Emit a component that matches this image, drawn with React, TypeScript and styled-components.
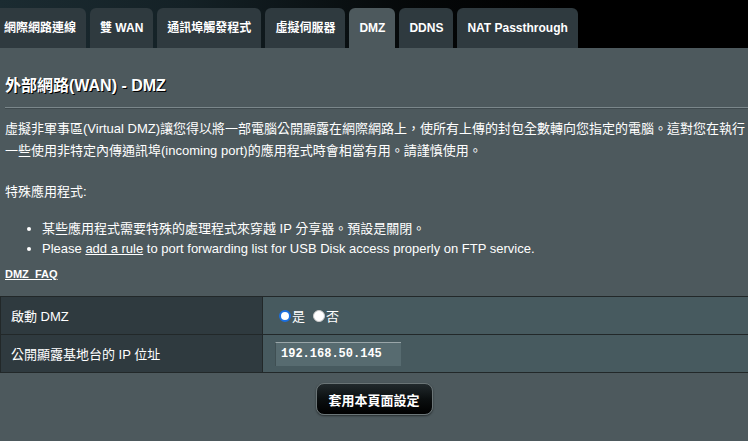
import React from "react";
import styled, { createGlobalStyle } from "styled-components";

const GlobalStyle = createGlobalStyle`
  html, body {
    margin: 0;
    padding: 0;
    background: #4d595d;
  }
  body {
    font-family: "Liberation Sans", Arial, "Noto Sans CJK TC", sans-serif;
    color: #ffffff;
    font-size: 13px;
  }
`;

const Page = styled.div`
  width: 748px;
  min-height: 441px;
  overflow: hidden;
  background: #4d595d;
`;

const TopBar = styled.div`
  height: 48px;
  padding-top: 8px;
  box-sizing: border-box;
  background: linear-gradient(to right, #1b2b31 0%, #142126 25%, #050809 55%, #000000 75%);
  overflow: hidden;
`;

const TabRow = styled.div`
  display: flex;
  gap: 4px;
  margin-left: -6px;
  height: 40px;
`;

const Tab = styled.div<{ $active?: boolean }>`
  display: flex;
  align-items: center;
  height: 40px;
  padding: 0 10px;
  border-radius: 6px 6px 0 0;
  background: ${(p) => (p.$active ? "#4d595d" : "#2f3a3f")};
  font-size: 12px;
  font-weight: bold;
  white-space: nowrap;
  color: #ffffff;
  line-height: 14px;
`;

const Content = styled.div`
  display: flex;
  flex-direction: column;
`;

const Title = styled.div`
  margin-top: 28px;
  padding-left: 5px;
  font-size: 16px;
  line-height: 20px;
  font-weight: bold;
  text-shadow: 1px 1px 0 #000;
`;

const Divider = styled.div`
  margin: 11px 0 0 5px;
  height: 1px;
  background: #7b878b;
  border-bottom: 1px solid #3f4a4e;
`;

const Desc = styled.p`
  margin: 9px 0 0;
  padding: 0 0 0 5px;
  line-height: 22px;
`;

const SectionLabel = styled.div`
  margin-top: 19px;
  padding-left: 5px;
  line-height: 22px;
`;

const BulletList = styled.ul`
  margin: 16px 0 0;
  padding: 0 0 0 42px;
  list-style: disc;
  line-height: 20px;
`;

const TextLink = styled.a`
  color: #ffffff;
  text-decoration: underline;
`;

const FaqLink = styled.a`
  margin-top: 5px;
  padding-left: 5px;
  align-self: flex-start;
  font-size: 11px;
  font-weight: bold;
  line-height: 20px;
  color: #ffffff;
  text-decoration: underline;
`;

const FormTable = styled.table`
  margin-top: 12px;
  width: 100%;
  border-collapse: collapse;
  border-top: 1px solid #222829;
  border-bottom: 1px solid #222829;
`;

const Row = styled.tr`
  height: 38px;
  border-bottom: 1px solid #222829;
  &:last-child {
    border-bottom: none;
  }
`;

const LabelCell = styled.th`
  width: 262px;
  padding: 0 0 0 10px;
  text-align: left;
  font-weight: normal;
  background: #2f3a3f;
  border-left: 1px solid #222829;
  border-right: 1px solid #222829;
  box-sizing: border-box;
`;

const ValueCell = styled.td`
  padding: 0 0 0 12px;
  background: #475a5f;
`;

const RadioGroup = styled.label`
  display: inline-flex;
  align-items: center;
  margin-right: 4px;
`;

const Radio = styled.input.attrs({ type: "radio" })`
  appearance: none;
  width: 12px;
  height: 12px;
  margin: 0 1px 0 4px;
  border-radius: 50%;
  background: #ffffff;
  border: 1px solid #c9c9c9;
  box-sizing: border-box;
  &:checked {
    border: 2px solid #1a6fe0;
  }
`;

const IpInput = styled.input`
  width: 126px;
  height: 24px;
  box-sizing: border-box;
  padding: 0 5px;
  background: #576b70;
  border: 0;
  border-top: 1px solid #9aa6a9;
  border-left: 1px solid #3f4f53;
  color: #ffffff;
  font-family: "Liberation Mono", monospace;
  font-weight: bold;
  font-size: 12px;
  outline: none;
`;

const ButtonRow = styled.div`
  display: flex;
  justify-content: center;
  margin-top: 10px;
`;

const ApplyButton = styled.button`
  width: 117px;
  height: 32px;
  border-radius: 8px;
  border: 1px solid #6b7577;
  background: linear-gradient(to bottom, #21292c 0%, #0b0f10 50%, #000000 100%);
  box-shadow: 0 1px 2px rgba(0, 0, 0, 0.5);
  color: #ffffff;
  font-family: "Liberation Sans", Arial, "Noto Sans CJK TC", sans-serif;
  font-size: 13px;
  font-weight: bold;
  cursor: pointer;
`;

const tabs = ["網際網路連線", "雙 WAN", "通訊埠觸發程式", "虛擬伺服器", "DMZ", "DDNS", "NAT Passthrough"];

export default function App() {
  return (
    <Page>
      <GlobalStyle />
      <TopBar>
        <TabRow>
          {tabs.map((t) => (
            <Tab key={t} $active={t === "DMZ"}>
              {t}
            </Tab>
          ))}
        </TabRow>
      </TopBar>
      <Content>
        <Title>外部網路(WAN) - DMZ</Title>
        <Divider />
        <Desc>
          虛擬非軍事區(Virtual DMZ)讓您得以將一部電腦公開顯露在網際網路上，使所有上傳的封包全數轉向您指定的電腦。這對您在執行一些使用非特定內傳通訊埠(incoming port)的應用程式時會相當有用。請謹慎使用。
        </Desc>
        <SectionLabel>特殊應用程式:</SectionLabel>
        <BulletList>
          <li>某些應用程式需要特殊的處理程式來穿越 IP 分享器。預設是關閉。</li>
          <li>
            Please <TextLink href="#">add a rule</TextLink> to port forwarding list for USB Disk access properly on FTP service.
          </li>
        </BulletList>
        <FaqLink href="#">DMZ_FAQ</FaqLink>
        <FormTable>
          <tbody>
            <Row>
              <LabelCell>啟動 DMZ</LabelCell>
              <ValueCell>
                <RadioGroup>
                  <Radio name="dmz" defaultChecked />是
                </RadioGroup>
                <RadioGroup>
                  <Radio name="dmz" />否
                </RadioGroup>
              </ValueCell>
            </Row>
            <Row>
              <LabelCell>公開顯露基地台的 IP 位址</LabelCell>
              <ValueCell>
                <IpInput defaultValue="192.168.50.145" />
              </ValueCell>
            </Row>
          </tbody>
        </FormTable>
        <ButtonRow>
          <ApplyButton>套用本頁面設定</ApplyButton>
        </ButtonRow>
      </Content>
    </Page>
  );
}
